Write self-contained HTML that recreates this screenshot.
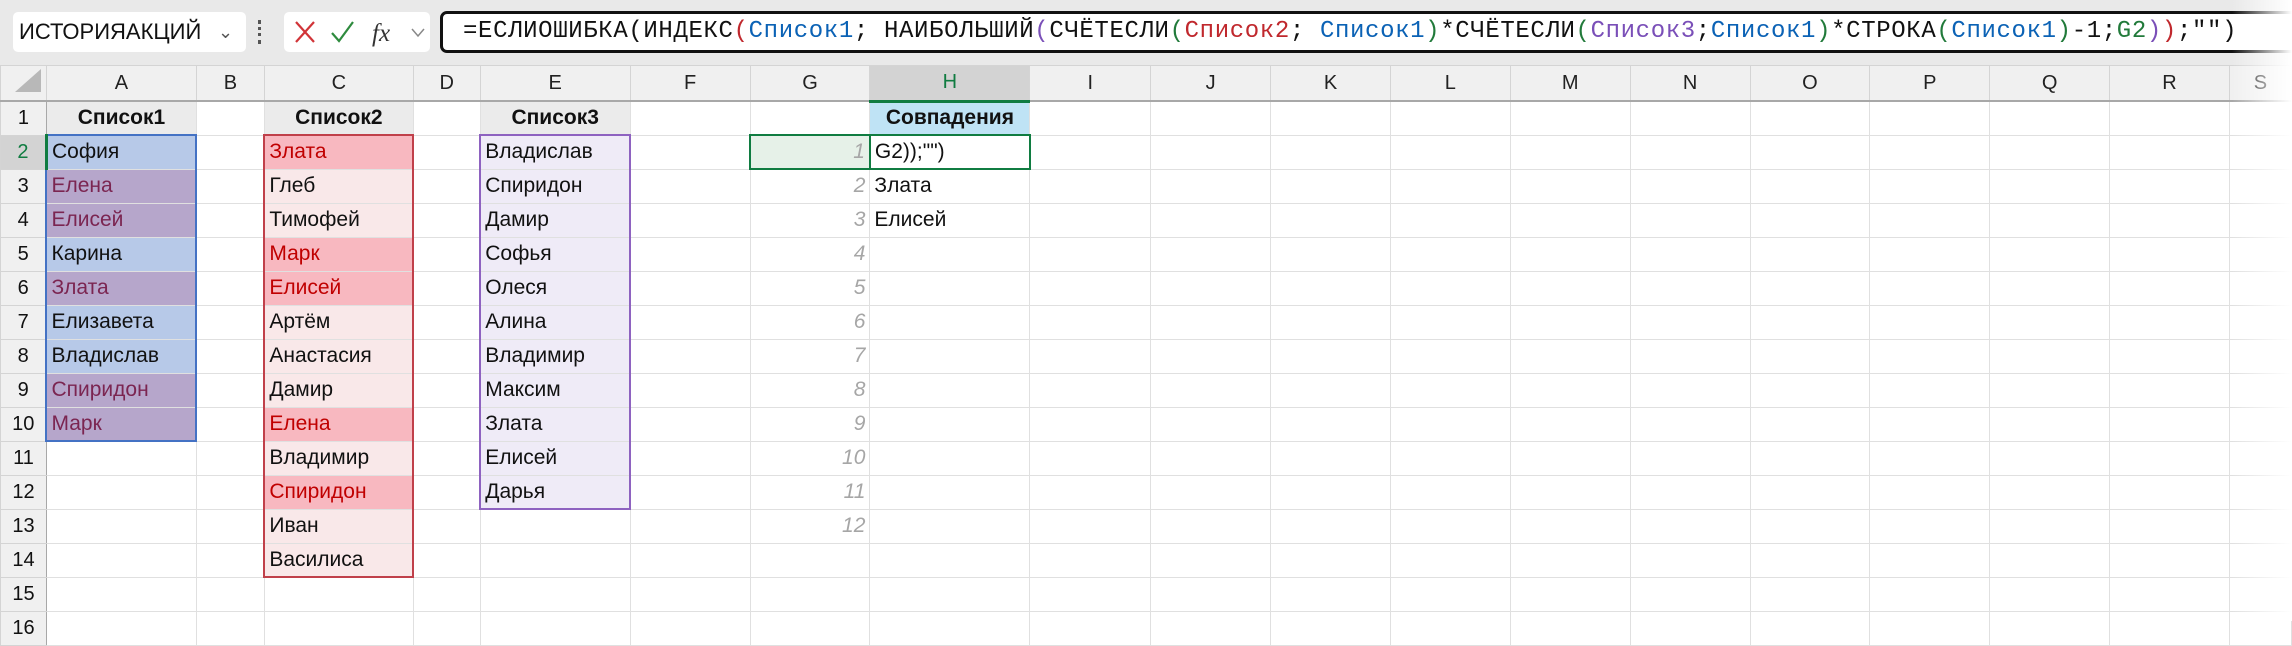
<!DOCTYPE html>
<html><head><meta charset="utf-8"><style>
body{margin:0;width:2292px;height:621px;overflow:hidden;background:#fff;font-family:"Liberation Sans","Noto Sans CJK SC",sans-serif;position:relative}
.top{position:absolute;left:0;top:0;width:2292px;height:65px;background:#e9e9e9}
.nb{position:absolute;left:13px;top:12px;width:233px;height:40px;background:#fff;border-radius:5px;font-size:22px;line-height:40px;padding-left:6px;box-sizing:border-box;color:#111}
.fxb{position:absolute;left:284px;top:12px;width:146px;height:40px;background:#fff;border-radius:5px}
.fb{position:absolute;left:440px;top:11px;width:1870px;height:42px;background:#fff;border:3px solid #111;border-radius:7px;box-sizing:border-box;font-family:"Liberation Mono",monospace;font-size:24px;line-height:36px;padding-left:20px;white-space:pre;letter-spacing:0.63px;color:#111}
.b{color:#0b62b5}.r{color:#c0282d}.p{color:#7a4fb8}.g{color:#217a3a}
table{position:absolute;left:0;top:65px;border-collapse:collapse;table-layout:fixed}
td{height:34px;border:1px solid #e0e0e0;font-size:21px;padding:0 4px;white-space:nowrap;overflow:hidden;color:#111;box-sizing:border-box}
tr.h td{height:31px;background:#f0f0f0;text-align:center;border-color:#d4d4d4;border-bottom:2px solid #a8a8a8;color:#222;font-size:20px;padding:0}
td.rh{background:#f0f0f0;text-align:center;border-color:#d4d4d4;border-right:1px solid #a8a8a8;padding:0;font-size:20px}
.hd{background:#ebebeb;font-weight:bold;text-align:center}
.bl{background:#b7c9e8}.pu{background:#b6a6cb;color:#7b2551}
.pk{background:#f8b8c0;color:#c00000}.lp{background:#f9e8e9}
.lv{background:#efebf7}
.gi{text-align:right;font-style:italic;color:#a6a6a6}
.fade{position:absolute;right:0;top:0;width:60px;height:621px;background:linear-gradient(to right,rgba(255,255,255,0),#fff)}
</style></head><body>
<div class="top"></div>
<div class="nb">ИСТОРИЯАКЦИЙ<span style="position:absolute;left:205px;top:0;color:#555;font-size:18px">&#8964;</span></div>
<div style="position:absolute;left:258px;top:20px;width:3px;height:24px;border-left:3px dotted #555"></div>
<div class="fxb">
<svg width="146" height="40"><path d="M12 10 L30 30 M30 10 L12 30" stroke="#d13438" stroke-width="2.2" fill="none"/><path d="M48 21 L55 29 L69 10" stroke="#2e8b3e" stroke-width="2.2" fill="none"/><text x="88" y="29" font-family="Liberation Serif" font-style="italic" font-size="25" fill="#333">fx</text><path d="M128 17 L134 24 L140 17" stroke="#888" stroke-width="1.5" fill="none"/></svg></div>
<div class="fb">=ЕСЛИОШИБКА(ИНДЕКС<span class="r">(</span><span class="b">Список1</span>; НАИБОЛЬШИЙ<span class="p">(</span>СЧЁТЕСЛИ<span class="g">(</span><span class="r">Список2</span>; <span class="b">Список1</span><span class="g">)</span>*СЧЁТЕСЛИ<span class="g">(</span><span class="p">Список3</span>;<span class="b">Список1</span><span class="g">)</span>*СТРОКА<span class="g">(</span><span class="b">Список1</span><span class="g">)</span>-1;<span class="g">G2</span><span class="p">)</span><span class="r">)</span>;"")</div>
<table>
<colgroup><col style="width:46px"><col style="width:150px"><col style="width:68px"><col style="width:149px"><col style="width:67px"><col style="width:150px"><col style="width:120px"><col style="width:120px"><col style="width:160px"><col style="width:121px"><col style="width:120px"><col style="width:120px"><col style="width:120px"><col style="width:120px"><col style="width:120px"><col style="width:120px"><col style="width:120px"><col style="width:120px"><col style="width:120px"><col style="width:62px"></colgroup>
<tr class="h"><td style="background:#f0f0f0"><svg width="40" height="28"><path d="M38 3 L38 26 L12 26 Z" fill="#b8b8b8"/></svg></td><td>A</td><td>B</td><td>C</td><td>D</td><td>E</td><td>F</td><td>G</td><td style="background:#d3d3d3;border-bottom:3px solid #107c41;color:#107c41">H</td><td>I</td><td>J</td><td>K</td><td>L</td><td>M</td><td>N</td><td>O</td><td>P</td><td>Q</td><td>R</td><td>S</td></tr>
<tr><td class="rh">1</td><td class="hd" style="border-bottom:2px solid #4472c4">Список1</td><td></td><td class="hd" style="border-bottom:2px solid #c0404a">Список2</td><td></td><td class="hd" style="border-bottom:2px solid #8e62c0">Список3</td><td></td><td></td><td class="hd" style="background:#bfe3f5">Совпадения</td><td></td><td></td><td></td><td></td><td></td><td></td><td></td><td></td><td></td><td></td><td></td></tr>
<tr><td class="rh" style="background:#d3d3d3;color:#107c41;border-right:3px solid #107c41">2</td><td class="bl" style="border-left:2px solid #4472c4;border-right:2px solid #4472c4">София</td><td></td><td class="pk" style="border-left:2px solid #c0404a;border-right:2px solid #c0404a">Злата</td><td></td><td class="lv" style="border-left:2px solid #8e62c0;border-right:2px solid #8e62c0">Владислав</td><td></td><td class="gi" style="background:#e6f1e8;border:2px solid #107c41">1</td><td style="border:2px solid #107c41">G2));"")</td><td></td><td></td><td></td><td></td><td></td><td></td><td></td><td></td><td></td><td></td><td></td></tr>
<tr><td class="rh">3</td><td class="pu" style="border-left:2px solid #4472c4;border-right:2px solid #4472c4">Елена</td><td></td><td class="lp" style="border-left:2px solid #c0404a;border-right:2px solid #c0404a">Глеб</td><td></td><td class="lv" style="border-left:2px solid #8e62c0;border-right:2px solid #8e62c0">Спиридон</td><td></td><td class="gi">2</td><td>Злата</td><td></td><td></td><td></td><td></td><td></td><td></td><td></td><td></td><td></td><td></td><td></td></tr>
<tr><td class="rh">4</td><td class="pu" style="border-left:2px solid #4472c4;border-right:2px solid #4472c4">Елисей</td><td></td><td class="lp" style="border-left:2px solid #c0404a;border-right:2px solid #c0404a">Тимофей</td><td></td><td class="lv" style="border-left:2px solid #8e62c0;border-right:2px solid #8e62c0">Дамир</td><td></td><td class="gi">3</td><td>Елисей</td><td></td><td></td><td></td><td></td><td></td><td></td><td></td><td></td><td></td><td></td><td></td></tr>
<tr><td class="rh">5</td><td class="bl" style="border-left:2px solid #4472c4;border-right:2px solid #4472c4">Карина</td><td></td><td class="pk" style="border-left:2px solid #c0404a;border-right:2px solid #c0404a">Марк</td><td></td><td class="lv" style="border-left:2px solid #8e62c0;border-right:2px solid #8e62c0">Софья</td><td></td><td class="gi">4</td><td></td><td></td><td></td><td></td><td></td><td></td><td></td><td></td><td></td><td></td><td></td><td></td></tr>
<tr><td class="rh">6</td><td class="pu" style="border-left:2px solid #4472c4;border-right:2px solid #4472c4">Злата</td><td></td><td class="pk" style="border-left:2px solid #c0404a;border-right:2px solid #c0404a">Елисей</td><td></td><td class="lv" style="border-left:2px solid #8e62c0;border-right:2px solid #8e62c0">Олеся</td><td></td><td class="gi">5</td><td></td><td></td><td></td><td></td><td></td><td></td><td></td><td></td><td></td><td></td><td></td><td></td></tr>
<tr><td class="rh">7</td><td class="bl" style="border-left:2px solid #4472c4;border-right:2px solid #4472c4">Елизавета</td><td></td><td class="lp" style="border-left:2px solid #c0404a;border-right:2px solid #c0404a">Артём</td><td></td><td class="lv" style="border-left:2px solid #8e62c0;border-right:2px solid #8e62c0">Алина</td><td></td><td class="gi">6</td><td></td><td></td><td></td><td></td><td></td><td></td><td></td><td></td><td></td><td></td><td></td><td></td></tr>
<tr><td class="rh">8</td><td class="bl" style="border-left:2px solid #4472c4;border-right:2px solid #4472c4">Владислав</td><td></td><td class="lp" style="border-left:2px solid #c0404a;border-right:2px solid #c0404a">Анастасия</td><td></td><td class="lv" style="border-left:2px solid #8e62c0;border-right:2px solid #8e62c0">Владимир</td><td></td><td class="gi">7</td><td></td><td></td><td></td><td></td><td></td><td></td><td></td><td></td><td></td><td></td><td></td><td></td></tr>
<tr><td class="rh">9</td><td class="pu" style="border-left:2px solid #4472c4;border-right:2px solid #4472c4">Спиридон</td><td></td><td class="lp" style="border-left:2px solid #c0404a;border-right:2px solid #c0404a">Дамир</td><td></td><td class="lv" style="border-left:2px solid #8e62c0;border-right:2px solid #8e62c0">Максим</td><td></td><td class="gi">8</td><td></td><td></td><td></td><td></td><td></td><td></td><td></td><td></td><td></td><td></td><td></td><td></td></tr>
<tr><td class="rh">10</td><td class="pu" style="border-left:2px solid #4472c4;border-right:2px solid #4472c4;border-bottom:2px solid #4472c4">Марк</td><td></td><td class="pk" style="border-left:2px solid #c0404a;border-right:2px solid #c0404a">Елена</td><td></td><td class="lv" style="border-left:2px solid #8e62c0;border-right:2px solid #8e62c0">Злата</td><td></td><td class="gi">9</td><td></td><td></td><td></td><td></td><td></td><td></td><td></td><td></td><td></td><td></td><td></td><td></td></tr>
<tr><td class="rh">11</td><td></td><td></td><td class="lp" style="border-left:2px solid #c0404a;border-right:2px solid #c0404a">Владимир</td><td></td><td class="lv" style="border-left:2px solid #8e62c0;border-right:2px solid #8e62c0">Елисей</td><td></td><td class="gi">10</td><td></td><td></td><td></td><td></td><td></td><td></td><td></td><td></td><td></td><td></td><td></td><td></td></tr>
<tr><td class="rh">12</td><td></td><td></td><td class="pk" style="border-left:2px solid #c0404a;border-right:2px solid #c0404a">Спиридон</td><td></td><td class="lv" style="border-left:2px solid #8e62c0;border-right:2px solid #8e62c0;border-bottom:2px solid #8e62c0">Дарья</td><td></td><td class="gi">11</td><td></td><td></td><td></td><td></td><td></td><td></td><td></td><td></td><td></td><td></td><td></td><td></td></tr>
<tr><td class="rh">13</td><td></td><td></td><td class="lp" style="border-left:2px solid #c0404a;border-right:2px solid #c0404a">Иван</td><td></td><td></td><td></td><td class="gi">12</td><td></td><td></td><td></td><td></td><td></td><td></td><td></td><td></td><td></td><td></td><td></td><td></td></tr>
<tr><td class="rh">14</td><td></td><td></td><td class="lp" style="border-left:2px solid #c0404a;border-right:2px solid #c0404a;border-bottom:2px solid #c0404a">Василиса</td><td></td><td></td><td></td><td></td><td></td><td></td><td></td><td></td><td></td><td></td><td></td><td></td><td></td><td></td><td></td><td></td></tr>
<tr><td class="rh">15</td><td></td><td></td><td></td><td></td><td></td><td></td><td></td><td></td><td></td><td></td><td></td><td></td><td></td><td></td><td></td><td></td><td></td><td></td><td></td></tr>
<tr><td class="rh">16</td><td></td><td></td><td></td><td></td><td></td><td></td><td></td><td></td><td></td><td></td><td></td><td></td><td></td><td></td><td></td><td></td><td></td><td></td><td></td></tr>
</table>
<div class="fade"></div>
</body></html>
